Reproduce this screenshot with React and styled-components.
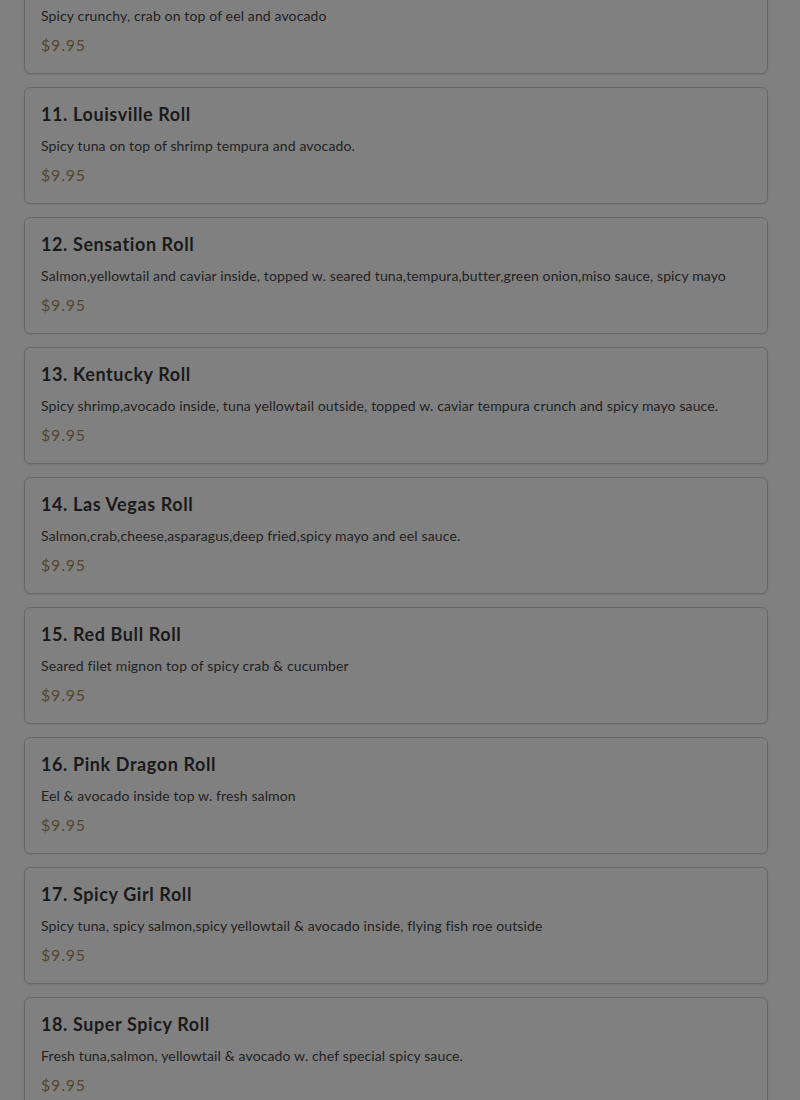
import React from 'react'
import styled, { createGlobalStyle } from 'styled-components'

const rolls = [
    { no: 10, name: 'Crunchy Eel Roll', desc: 'Spicy crunchy, crab on top of eel and avocado', price: '$9.95' },
    { no: 11, name: 'Louisville Roll', desc: 'Spicy tuna on top of shrimp tempura and avocado.', price: '$9.95' },
    { no: 12, name: 'Sensation Roll', desc: 'Salmon,yellowtail and caviar inside, topped w. seared tuna,tempura,butter,green onion,miso sauce, spicy mayo', price: '$9.95' },
    { no: 13, name: 'Kentucky Roll', desc: 'Spicy shrimp,avocado inside, tuna yellowtail outside, topped w. caviar tempura crunch and spicy mayo sauce.', price: '$9.95' },
    { no: 14, name: 'Las Vegas Roll', desc: 'Salmon,crab,cheese,asparagus,deep fried,spicy mayo and eel sauce.', price: '$9.95' },
    { no: 15, name: 'Red Bull Roll', desc: 'Seared filet mignon top of spicy crab & cucumber', price: '$9.95' },
    { no: 16, name: 'Pink Dragon Roll', desc: 'Eel & avocado inside top w. fresh salmon', price: '$9.95' },
    { no: 17, name: 'Spicy Girl Roll', desc: 'Spicy tuna, spicy salmon,spicy yellowtail & avocado inside, flying fish roe outside', price: '$9.95' },
    { no: 18, name: 'Super Spicy Roll', desc: 'Fresh tuna,salmon, yellowtail & avocado w. chef special spicy sauce.', price: '$9.95' },
    { no: 19, name: 'Dragon Roll', desc: 'Shrimp tempura inside, eel and avocado on top', price: '$9.95' },
]

const App = () => {
    return (
        <>
            <GlobalStyle />
            <Page>
                <List>
                    {rolls.map((r) => (
                        <Card key={r.no}>
                            <Title>{r.no}. {r.name}</Title>
                            <Description>{r.desc}</Description>
                            <Price>{r.price}</Price>
                        </Card>
                    ))}
                </List>
            </Page>
        </>
    )
}

export default App

const GlobalStyle = createGlobalStyle`
    html, body {
        margin: 0;
        padding: 0;
        background: #808080;
        overflow: hidden;
    }
    body {
        font-family: Lato, "Noto Sans", sans-serif;
    }
`;

const Page = styled.main`
    height: 1100px;
    overflow: hidden;
    padding: 0 32px 0 24px;
`;

const List = styled.div`
    display: flex;
    flex-direction: column;
    gap: 13px;
    margin-top: -43px;
`;

const Card = styled.div`
    border: 1px solid #686868;
    border-radius: 6px;
    padding: 15px 16px 16px;
    background: #808080;
    box-shadow: 0 1px 2px rgba(0, 0, 0, 0.08);
`;

const Title = styled.h3`
    margin: 0;
    font-size: 18px;
    line-height: 22px;
    font-weight: 700;
    letter-spacing: 0.6px;
    color: #1a1a1a;
`;

const Description = styled.p`
    margin: 10px 0 0;
    font-size: 14px;
    line-height: 21px;
    letter-spacing: 0.13px;
    color: #222222;
`;

const Price = styled.div`
    margin-top: 7px;
    font-size: 16px;
    line-height: 24px;
    letter-spacing: 0.8px;
    color: #54472e;
`;
